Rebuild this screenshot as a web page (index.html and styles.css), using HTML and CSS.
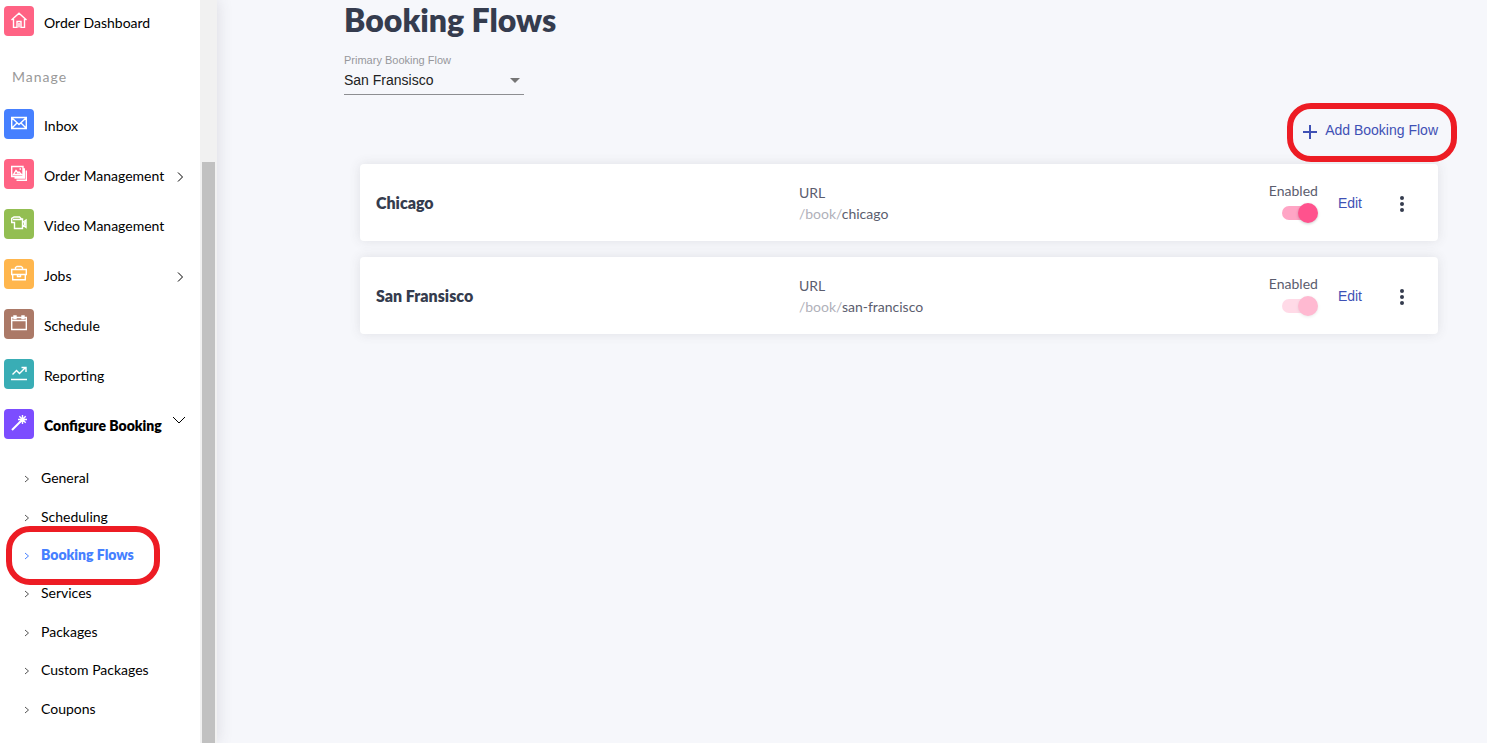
FILE: index.html
```
<!DOCTYPE html>
<html lang="en">
<head>
<meta charset="utf-8">
<meta name="viewport" content="width=device-width, initial-scale=1">
<title>Booking Flows</title>
<link rel="stylesheet" href="styles.css">
</head>
<body>
<div class="app">
  <aside class="sidebar">
    <nav class="nav" aria-label="Main">
      <a class="nav-item" href="#"><span class="tile pink"><svg viewBox="0 0 16 16"><path d="M.5 8 8 1.200l7.500 6.800M2.500 7v8.500h3.500v-6h4v6h3.500V7M8 11v4.500"/></svg></span>Order Dashboard</a>
      <h2 class="nav-heading">Manage</h2>
      <a class="nav-item" href="#"><span class="tile blue"><svg viewBox="0 0 16 16"><path d="M.7 2.500h14.600v11H.7zM1 3l7 6.500L15 3M1 13l5-5M15 13l-5-5"/></svg></span>Inbox</a>
      <a class="nav-item" href="#"><span class="tile pink"><svg viewBox="0 0 16 16"><path d="M.7 1.500h11.300v10H.7zM12.500 4h.8v9H3.500M15.300 5.500v9.800H5.500M2.500 9.500l2.500-4 2 2.500 1-1 2.500 2.500zM8.500 4h1.500"/></svg></span>Order Management<svg class="chevron" viewBox="0 0 8 10"><path d="m1 .5 4.500 4.500L1 9.500"/></svg></a>
      <a class="nav-item" href="#"><span class="tile green"><svg viewBox="0 0 16 16"><path d="M3.500 7.500H.7v-4L3 2h5.500l2 2h1v9.500h-8zM11.500 7.500l3.500-2.500v7.500L11.500 10M2 4.500h8.500M13.500 7v3.500"/></svg></span>Video Management</a>
      <a class="nav-item" href="#"><span class="tile orange"><svg viewBox="0 0 16 16"><path d="M.7 4.500h14.600v5H.7zM1.700 9.500v5.200h12.600V9.500M4.500 4V2.500l1.500-1h4l1.500 1V4M6.500 9.500v2h3v-2"/></svg></span>Jobs<svg class="chevron" viewBox="0 0 8 10"><path d="m1 .5 4.500 4.500L1 9.500"/></svg></a>
      <a class="nav-item" href="#"><span class="tile brown"><svg viewBox="0 0 16 16"><path d="M.7 2.500h14.600v12H.7zM.5 5.500h15M3 1h2v2.500H3zM11 1h2v2.500h-2z"/></svg></span>Schedule</a>
      <a class="nav-item" href="#"><span class="tile teal"><svg viewBox="0 0 16 16"><path d="M0 14.500h16M1.500 9.500 5.500 5.500l3 3L14.500 2.500M10.500 2.500H15V7"/></svg></span>Reporting</a>
      <a class="nav-item current" href="#" aria-expanded="true"><span class="tile purple"><svg viewBox="0 0 16 16"><path class="bold" d="M1 15 10.500 5.500"/><path d="M11.500 0v9M7 4.500h9M8.300 1.300l6.400 6.400M14.700 1.300 8.300 7.700"/></svg></span>Configure Booking<svg class="chevron down" viewBox="0 0 14 8"><path d="m1 1 6 6 6-6"/></svg></a>
      <ul class="subnav">
        <li><a class="sub-item" href="#"><svg class="tick" viewBox="0 0 6 8"><path d="m1 1 3.500 3L1 7"/></svg>General</a></li>
        <li><a class="sub-item" href="#"><svg class="tick" viewBox="0 0 6 8"><path d="m1 1 3.500 3L1 7"/></svg>Scheduling</a></li>
        <li><a class="sub-item active" href="#" aria-current="page"><svg class="tick" viewBox="0 0 6 8"><path d="m1 1 3.500 3L1 7"/></svg>Booking Flows<span class="marker marker-nav"></span></a></li>
        <li><a class="sub-item" href="#"><svg class="tick" viewBox="0 0 6 8"><path d="m1 1 3.500 3L1 7"/></svg>Services</a></li>
        <li><a class="sub-item" href="#"><svg class="tick" viewBox="0 0 6 8"><path d="m1 1 3.500 3L1 7"/></svg>Packages</a></li>
        <li><a class="sub-item" href="#"><svg class="tick" viewBox="0 0 6 8"><path d="m1 1 3.500 3L1 7"/></svg>Custom Packages</a></li>
        <li><a class="sub-item" href="#"><svg class="tick" viewBox="0 0 6 8"><path d="m1 1 3.500 3L1 7"/></svg>Coupons</a></li>
      </ul>
    </nav>
    <div class="scrollbar"><div class="thumb"></div></div>
  </aside>
  <main class="main">
    <h1 class="title">Booking Flows</h1>
    <div class="field">
      <label class="field-label" for="primary">Primary Booking Flow</label>
      <div class="select-wrap">
        <select class="select" id="primary"><option>San Fransisco</option><option>Chicago</option></select>
        <svg class="caret" viewBox="0 0 10 5"><path d="M0 0h10L5 5z"/></svg>
      </div>
    </div>
    <div class="toolbar">
      <button class="add" type="button"><svg class="plus" viewBox="0 0 14 14"><path d="M7 0v14M0 7h14"/></svg>Add Booking Flow<span class="marker marker-add"></span></button>
    </div>
    <section class="cards">
      <article class="card">
        <h2 class="name">Chicago</h2>
        <div class="url"><div>URL</div><div class="path"><span class="prefix">/book/</span>chicago</div></div>
        <div class="actions">
          <label class="toggle">Enabled<input class="switch" type="checkbox" role="switch" checked></label>
          <button class="edit" type="button">Edit</button>
          <button class="more" type="button" aria-label="More"><svg viewBox="0 0 4 16"><circle cx="2" cy="2" r="2"/><circle cx="2" cy="8" r="2"/><circle cx="2" cy="14" r="2"/></svg></button>
        </div>
      </article>
      <article class="card">
        <h2 class="name">San Fransisco</h2>
        <div class="url"><div>URL</div><div class="path"><span class="prefix">/book/</span>san-francisco</div></div>
        <div class="actions">
          <label class="toggle">Enabled<input class="switch" type="checkbox" role="switch" checked disabled></label>
          <button class="edit" type="button">Edit</button>
          <button class="more" type="button" aria-label="More"><svg viewBox="0 0 4 16"><circle cx="2" cy="2" r="2"/><circle cx="2" cy="8" r="2"/><circle cx="2" cy="14" r="2"/></svg></button>
        </div>
      </article>
    </section>
  </main>
</div>
</body>
</html>
```
FILE: styles.css
```
* { box-sizing: border-box; }
body { margin: 0; background: #f6f7fb; color: #5b5d6e; font: 14px/20px Lato, sans-serif; }
a { color: inherit; text-decoration: none; }
button { border: 0; padding: 0; background: none; cursor: pointer; }
svg { display: block; fill: none; stroke: currentColor; }
.app { display: flex; min-height: 100vh; }

.sidebar { display: flex; flex: none; width: 217px; background: #fff; box-shadow: 0 0 15px rgba(69, 65, 78, .16); }
.nav { flex: 1; padding-top: 6px; color: #000; }
.nav-item { display: flex; align-items: center; gap: 10px; height: 34px; margin-bottom: 16px; padding: 0 15px 0 4px; white-space: nowrap; }
.nav-item.current { font-weight: 800; }
.tile { display: flex; align-items: center; justify-content: center; width: 30px; height: 30px; margin-bottom: 4px; border-radius: 4px; color: #fff; }
.tile svg { width: 16px; height: 16px; margin-bottom: 2px; stroke-width: 1.4; }
.tile .bold { stroke-width: 2; }
.pink { background: #ff6384; }
.blue { background: #4680ff; }
.green { background: #93be52; }
.orange { background: #ffb64d; }
.brown { background: #ab7967; }
.teal { background: #39adb5; }
.purple { background: #7c4dff; }
.nav-heading { margin: 0 0 22px 12px; padding-top: 11px; color: #999; font-size: 14px; font-weight: 400; line-height: 20px; letter-spacing: 1px; }
.chevron { width: 8px; height: 10px; margin: 2px 0 0 auto; }
.chevron.down { width: 14px; height: 8px; margin: 0 -1px 12px auto; }
.subnav { display: grid; grid-template-rows: repeat(7, 1fr); height: 269px; margin: 2px 0 0; padding: 0; list-style: none; }
.subnav li { display: grid; }
.sub-item { position: relative; display: flex; align-items: center; gap: 11px; padding-left: 24px; }
.sub-item.active { color: #4680ff; font-weight: 800; }
.tick { width: 6px; height: 8px; margin-top: 2px; color: #555; }
.active .tick { color: #4680ff; }
.scrollbar { width: 17px; padding: 162px 2px 0; background: #f1f1f1; display: flex; }
.thumb { flex: 1; background: #c1c1c1; }

.main { flex: 1; min-width: 0; padding: 0 33px 32px 127px; }
.title { margin: 0; color: #353c4e; font-size: 32px; font-weight: 800; line-height: 40px; }
.field { width: 180px; margin-top: 14px; font-family: "Liberation Sans", Arial, sans-serif; }
.field-label { display: block; color: #96979b; font-size: 11px; line-height: 12px; }
.select-wrap { display: flex; align-items: center; border-bottom: 1px solid #8d8e91; }
.select { flex: 1; height: 28px; padding: 0; margin-right: -14px; border: 0; background: none; color: #212121; font: inherit; font-size: 14px; appearance: none; }
.caret { width: 10px; height: 5px; margin-right: 4px; color: #757575; fill: currentColor; stroke: none; pointer-events: none; }
.toolbar { display: flex; justify-content: flex-end; padding: 17px 16px 0; }
.add { position: relative; display: flex; align-items: center; gap: 8px; height: 36px; color: #3f51b5; font: 14px "Liberation Sans", Arial, sans-serif; }
.plus { width: 14px; height: 14px; margin-top: 4px; stroke-width: 2; }
.marker { position: absolute; border: 6px solid #ed1c24; border-radius: 24px; pointer-events: none; }
.marker-nav { top: -10px; left: 6px; width: 154px; height: 59px; z-index: 1; }
.marker-add { inset: -9px -19px -14px -16px; }

.cards { display: flex; flex-direction: column; gap: 16px; padding: 16px 16px 0; }
.card { display: grid; grid-template-columns: 9fr 10fr auto; align-items: center; min-height: 77px; padding: 0 16px; border-radius: 4px; background: #fff; box-shadow: 0 0 12px rgba(69, 65, 78, .12); }
.name { margin: 0; color: #353c4e; font-size: 16px; font-weight: 800; line-height: 20px; }
.url { line-height: 21px; }
.prefix { color: #b0b1ba; }
.actions { display: flex; align-items: center; gap: 20px; }
.toggle { display: flex; flex-direction: column; align-items: flex-end; gap: 2px; padding-bottom: 2px; }
.switch { position: relative; width: 36px; height: 20px; margin: 0; appearance: none; }
.switch::before { content: ""; position: absolute; inset: 3px 2px 3px 0; border-radius: 7px; background: #ffa5c5; }
.switch::after { content: ""; position: absolute; inset: 0 0 0 16px; border-radius: 50%; background: #ff528d; box-shadow: 0 1px 3px rgba(0, 0, 0, .2); }
.switch:disabled { opacity: .4; }
.edit { color: #3f51b5; font: 14px "Liberation Sans", Arial, sans-serif; }
.more { display: flex; justify-content: center; width: 40px; padding-top: 2px; color: #353c4e; }
.more svg { width: 4px; height: 16px; fill: currentColor; stroke: none; }
```
